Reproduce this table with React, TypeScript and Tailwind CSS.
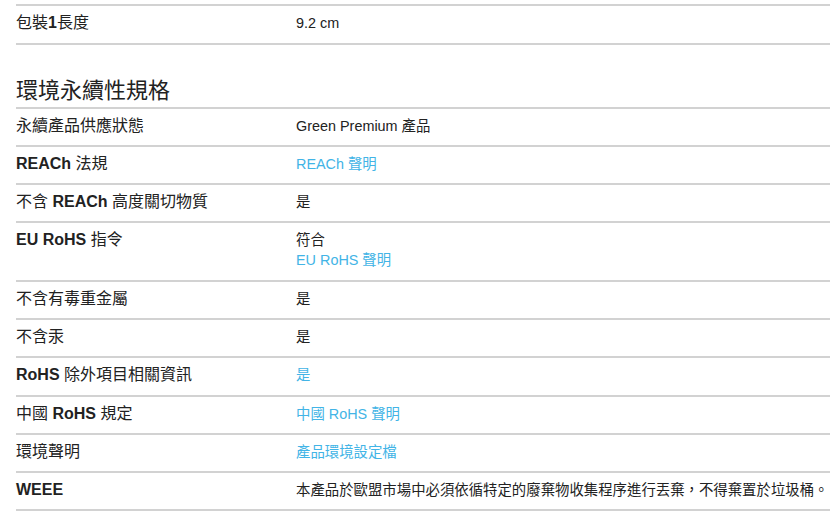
import React from 'react';

type Part = { text: string; link?: boolean };

interface Row {
  label: string;
  values: Part[];
}

const rows: Row[] = [
  { label: '永續產品供應狀態', values: [{ text: 'Green Premium 產品' }] },
  { label: 'REACh 法規', values: [{ text: 'REACh 聲明', link: true }] },
  { label: '不含 REACh 高度關切物質', values: [{ text: '是' }] },
  {
    label: 'EU RoHS 指令',
    values: [{ text: '符合' }, { text: 'EU RoHS 聲明', link: true }],
  },
  { label: '不含有毒重金屬', values: [{ text: '是' }] },
  { label: '不含汞', values: [{ text: '是' }] },
  { label: 'RoHS 除外項目相關資訊', values: [{ text: '是', link: true }] },
  { label: '中國 RoHS 規定', values: [{ text: '中國 RoHS 聲明', link: true }] },
  { label: '環境聲明', values: [{ text: '產品環境設定檔', link: true }] },
  {
    label: 'WEEE',
    values: [{ text: '本產品於歐盟市場中必須依循特定的廢棄物收集程序進行丟棄，不得棄置於垃圾桶。' }],
  },
];

// latin words in labels are bold, CJK stays regular
function Label({ text }: { text: string }) {
  const parts = text.split(/([A-Za-z0-9]+)/);
  return (
    <div className="w-[280px] shrink-0 text-[16px] leading-[20px] text-[#222]">
      {parts.map((p, i) =>
        /^[A-Za-z0-9]+$/.test(p) ? (
          <span key={i} className="font-bold">
            {p}
          </span>
        ) : (
          <span key={i}>{p}</span>
        )
      )}
    </div>
  );
}

function SpecRow({ row }: { row: Row }) {
  return (
    <div className="flex border-b-2 border-[#d2d2d2] pt-[7px] pb-[9.3px]">
      <Label text={row.label} />
      <div className="flex-1 whitespace-nowrap text-[14.4px] leading-[20px]">
        {row.values.map((v, i) => (
          <div key={i} className={v.link ? 'text-[#42b4e6]' : 'text-[#222]'}>
            {v.text}
          </div>
        ))}
      </div>
    </div>
  );
}

export default function App() {
  return (
    <div
      className="min-h-[521px] w-[830px] bg-white pl-4 pt-[4px]"
      style={{ fontFamily: '"Liberation Sans", "Noto Sans CJK TC", sans-serif' }}
    >
      <div className="border-y-2 border-[#d2d2d2]">
        <div className="flex pt-[7px] pb-[10px]">
          <Label text="包裝1長度" />
          <div className="flex-1 text-[14.4px] leading-[20px] text-[#222]">9.2 cm</div>
        </div>
      </div>

      <h2 className="mt-[32px] mb-[1.5px] text-[22px] leading-[28px] font-normal text-[#222]">
        環境永續性規格
      </h2>

      <div className="border-t-2 border-[#d2d2d2]">
        {rows.map((r) => (
          <SpecRow key={r.label} row={r} />
        ))}
      </div>
    </div>
  );
}
